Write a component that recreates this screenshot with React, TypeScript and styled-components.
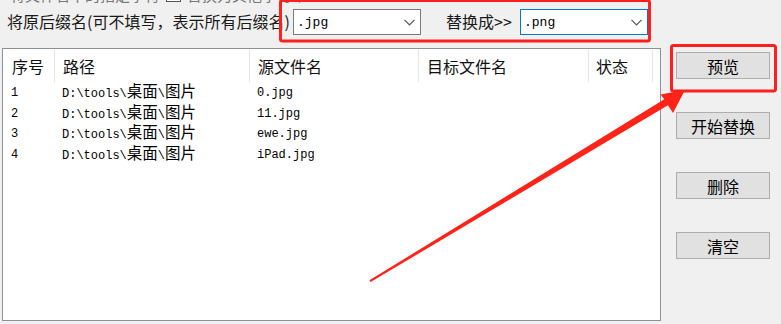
import styled, { createGlobalStyle } from 'styled-components'

const GlobalStyle = createGlobalStyle`
  html, body {
    margin: 0;
    padding: 0;
    background: #f0f0f0;
  }
  body {
    font-family: "Noto Sans CJK SC", "Noto Sans", sans-serif;
    color: #000;
  }
`

const Window = styled.div`
  position: relative;
  width: 781px;
  height: 324px;
  overflow: hidden;
  background: #f0f0f0;
  display: flex;
  flex-direction: column;
`

const CutRow = styled.div`
  height: 4px;
  overflow: hidden;
  padding-left: 10px;
`

const CutInner = styled.div`
  display: flex;
  align-items: center;
  gap: 6px;
  margin-top: -14px;
  height: 17px;
  font-size: 15px;
  line-height: 17px;
  color: #777;
  white-space: nowrap;
`

const CutBox = styled.span`
  display: inline-block;
  width: 13px;
  height: 13px;
  border: 1px solid #555;
  background: #fff;
`

const FilterRow = styled.div`
  height: 36px;
  display: flex;
  align-items: center;
  padding-left: 7px;
`

const Label = styled.span<{ width: number; gap?: number }>`
  flex: none;
  width: ${({ width }) => width}px;
  margin-left: ${({ gap }) => gap ?? 0}px;
  font-size: 16px;
  line-height: 20px;
  margin-bottom: 3px;
  white-space: nowrap;
  color: #1a1a1a;
`

const Combo = styled.div<{ width: number; focused?: boolean }>`
  position: relative;
  flex: none;
  box-sizing: border-box;
  width: ${({ width }) => width}px;
  height: 26px;
  background: #fff;
  border: 1px solid ${({ focused }) => (focused ? '#0078d7' : '#7a7a7a')};
  display: flex;
  align-items: center;
  justify-content: space-between;
  padding: 0 5px 0 3px;
  font-family: "Liberation Mono", monospace;
  font-size: 13px;
  color: #000;
`

const Chevron = () => (
  <svg width="11" height="7" viewBox="0 0 11 7">
    <polyline points="0.5,0.8 5.5,5.8 10.5,0.8" fill="none" stroke="#555" strokeWidth="1.2" />
  </svg>
)

const Main = styled.div`
  display: flex;
  align-items: flex-start;
  margin-top: 8px;
  padding-left: 2px;
`

const ListView = styled.div`
  box-sizing: border-box;
  width: 659px;
  height: 273px;
  background: #fff;
  border: 1px solid #8c9097;
  display: flex;
  flex-direction: column;
`

const HeaderRow = styled.div`
  display: flex;
  align-items: center;
  height: 34px;
`

const HeaderCell = styled.div<{ width: number; pad: number }>`
  box-sizing: border-box;
  width: ${({ width }) => width}px;
  height: 32px;
  padding-left: ${({ pad }) => pad}px;
  border-right: 1px solid #e5e5e5;
  display: flex;
  align-items: center;
  font-size: 16px;
  color: #111;
  white-space: nowrap;
`

const Row = styled.div`
  display: flex;
  height: 20.7px;
`

const Cell = styled.div<{ width: number; pad: number }>`
  box-sizing: border-box;
  width: ${({ width }) => width}px;
  padding-left: ${({ pad }) => pad}px;
  font-family: "Liberation Mono", monospace;
  font-size: 12px;
  line-height: 20px;
  white-space: nowrap;
  color: #000;
`

const Cjk = styled.span`
  font-family: "Noto Sans CJK SC", sans-serif;
  font-size: 15.5px;
  line-height: 1;
`

const SideBar = styled.div`
  display: flex;
  flex-direction: column;
  gap: 33px;
  margin-left: 15px;
  padding-top: 4px;
`

const Button = styled.button`
  box-sizing: border-box;
  width: 94px;
  height: 27px;
  padding: 0;
  background: #e1e1e1;
  border: 1px solid #adadad;
  border-radius: 0;
  font-family: "Noto Sans CJK SC", sans-serif;
  font-size: 16px;
  line-height: 20px;
  color: #000;
`

const Overlay = styled.svg`
  position: absolute;
  left: 0;
  top: 0;
  pointer-events: none;
`

const columns = [
  { title: '序号', width: 52, pad: 9 },
  { title: '路径', width: 195, pad: 8 },
  { title: '源文件名', width: 169, pad: 8 },
  { title: '目标文件名', width: 170, pad: 8 },
  { title: '状态', width: 64, pad: 7 },
]

const rows = [
  ['1', 'D:\\tools\\桌面\\图片', '0.jpg'],
  ['2', 'D:\\tools\\桌面\\图片', '11.jpg'],
  ['3', 'D:\\tools\\桌面\\图片', 'ewe.jpg'],
  ['4', 'D:\\tools\\桌面\\图片', 'iPad.jpg'],
]

// mixed text: ascii in the mono face, chinese runs a bit larger
const mixed = (text: string) =>
  text.split(/([\u4e00-\u9fff]+)/).map((part, i) =>
    /[\u4e00-\u9fff]/.test(part) ? <Cjk key={i}>{part}</Cjk> : part
  )

const App = () => {
  return (
    <Window>
      <GlobalStyle />
      <CutRow>
        <CutInner>
          <span>将文件名中的指定字符</span>
          <CutBox />
          <span>替换为其他字符串</span>
        </CutInner>
      </CutRow>
      <FilterRow>
        <Label width={286}>将原后缀名(可不填写，表示所有后缀名)</Label>
        <Combo width={128}>
          <span>.jpg</span>
          <Chevron />
        </Combo>
        <Label width={74} gap={25}>替换成&gt;&gt;</Label>
        <Combo width={128} focused>
          <span>.png</span>
          <Chevron />
        </Combo>
      </FilterRow>
      <Main>
        <ListView>
          <HeaderRow>
            {columns.map((c) => (
              <HeaderCell key={c.title} width={c.width} pad={c.pad}>
                {c.title}
              </HeaderCell>
            ))}
          </HeaderRow>
          {rows.map((r) => (
            <Row key={r[0]}>
              <Cell width={52} pad={8}>{r[0]}</Cell>
              <Cell width={195} pad={7}>{mixed(r[1])}</Cell>
              <Cell width={169} pad={7}>{r[2]}</Cell>
            </Row>
          ))}
        </ListView>
        <SideBar>
          <Button>预览</Button>
          <Button>开始替换</Button>
          <Button>删除</Button>
          <Button>清空</Button>
        </SideBar>
      </Main>
      <Overlay width="781" height="324" viewBox="0 0 781 324">
        <rect x="280.5" y="0.5" width="369" height="40.5" rx="2" fill="none" stroke="#ff1f1f" strokeWidth="3" />
        <rect x="671.5" y="45.5" width="104" height="45.5" rx="2" fill="none" stroke="#ff1f1f" strokeWidth="3" />
        <polygon
          points="369.4,280.3 664.3,99.3 660.5,94.5 685,90 673,113 667.9,105.3 370.6,282.1"
          fill="#ff2318"
          strokeLinejoin="round"
        />
      </Overlay>
    </Window>
  )
}

export default App
